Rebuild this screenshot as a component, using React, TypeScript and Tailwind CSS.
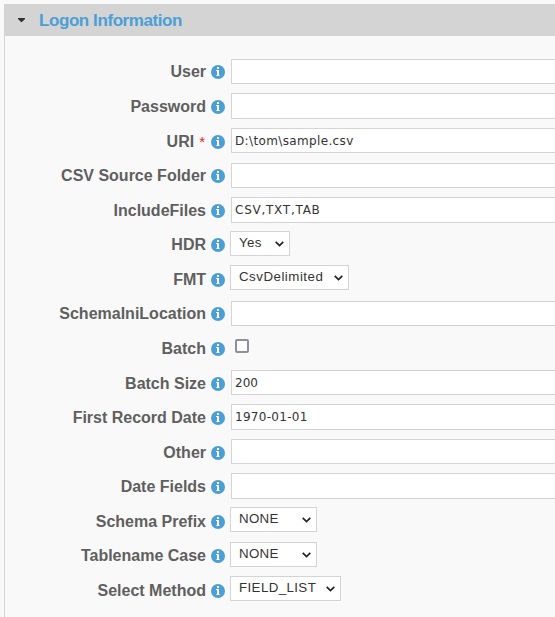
type Kind = 'text' | 'select' | 'check';

interface Field {
  label: string;
  row: string;
  kind: Kind;
  box?: string;
  value?: string;
  tracking?: string;
  required?: boolean;
}

const fields: Field[] = [
  { label: 'User', row: 'h-[35px]', kind: 'text', box: 'mt-[2px] h-[25px]' },
  { label: 'Password', row: 'h-[35px]', kind: 'text', box: 'mt-px h-[26px]' },
  { label: 'URI', row: 'h-[34px]', kind: 'text', box: 'mt-px h-[25px]', value: 'D:\\tom\\sample.csv', tracking: 'tracking-[0.36px]', required: true },
  { label: 'CSV Source Folder', row: 'h-[35px]', kind: 'text', box: 'mt-[2px] h-[25px]' },
  { label: 'IncludeFiles', row: 'h-[34px]', kind: 'text', box: 'mt-px h-[26px]', value: 'CSV,TXT,TAB', tracking: 'tracking-[0.75px]' },
  { label: 'HDR', row: 'h-[35px]', kind: 'select', box: 'mt-px w-[60px]', value: 'Yes', tracking: 'tracking-[0.4px]' },
  { label: 'FMT', row: 'h-[34px]', kind: 'select', box: 'w-[119px]', value: 'CsvDelimited', tracking: 'tracking-[0.5px]' },
  { label: 'SchemaIniLocation', row: 'h-[35px]', kind: 'text', box: 'mt-[2px] h-[25px]' },
  { label: 'Batch', row: 'h-[35px]', kind: 'check' },
  { label: 'Batch Size', row: 'h-[34px]', kind: 'text', box: 'mt-px h-[25px]', value: '200' },
  { label: 'First Record Date', row: 'h-[35px]', kind: 'text', box: 'mt-px h-[26px]', value: '1970-01-01', tracking: 'tracking-[0.3px]' },
  { label: 'Other', row: 'h-[34px]', kind: 'text', box: 'mt-px h-[25px]' },
  { label: 'Date Fields', row: 'h-[35px]', kind: 'text', box: 'mt-px h-[26px]' },
  { label: 'Schema Prefix', row: 'h-[34px]', kind: 'select', box: 'w-[87px]', value: 'NONE', tracking: 'tracking-[0.3px]' },
  { label: 'Tablename Case', row: 'h-[35px]', kind: 'select', box: 'mt-px w-[87px]', value: 'NONE', tracking: 'tracking-[0.3px]' },
  { label: 'Select Method', row: 'h-[34px]', kind: 'select', box: 'w-[111px]', value: 'FIELD_LIST', tracking: 'tracking-[0.4px]' },
];

function InfoIcon() {
  return (
    <svg className="mt-2 ml-[5px] h-[14px] w-[14px] shrink-0" viewBox="0 0 14 14">
      <circle cx="7" cy="7" r="7" fill="#4b9fd5" />
      <path d="M6 2h2v2H6zM5 5h3v6H6V6H5z" fill="#fff" />
      <path d="M5 10h4v1H5z" fill="#fff" opacity="0.6" />
    </svg>
  );
}

function Control({ field }: { field: Field }) {
  if (field.kind === 'check') {
    return <span className="mt-[5px] ml-[10px] h-[14px] w-[14px] rounded-[2px] border-2 border-[#8f8f9d] bg-white" />;
  }
  if (field.kind === 'select') {
    return (
      <div className={`ml-[5px] flex h-[25px] items-start justify-between border border-[#d4d4d4] bg-white pr-[5px] pl-2 ${field.box}`}>
        <span className={`whitespace-nowrap font-['Liberation_Sans',sans-serif] text-[13.3px] leading-[22px] text-[#333] ${field.tracking ?? ''}`}>{field.value}</span>
        <svg className="mt-[9px] h-[6px] w-[9px] shrink-0" viewBox="0 0 9 6" fill="none" stroke="#222" strokeWidth="1.7">
          <path d="M0.7 0.8L4.5 4.5L8.3 0.8" />
        </svg>
      </div>
    );
  }
  return (
    <div className={`ml-[6px] flex-1 border border-r-0 border-[#d4d4d4] bg-white pl-[3px] ${field.box}`}>
      <span className={`block whitespace-nowrap font-['DejaVu_Sans',sans-serif] text-[12px] leading-[25px] text-[#333] ${field.tracking ?? ''}`}>{field.value}</span>
    </div>
  );
}

export default function App() {
  return (
    <div className="h-[617px] w-[555px] overflow-hidden bg-[#f9f9f9] pt-1 pl-1 font-['Liberation_Sans',sans-serif]">
      <header className="flex h-8 items-center bg-[#d4d4d4] pl-[14px]">
        <svg className="h-[4px] w-[7px]" viewBox="0 0 7 4">
          <path d="M0 0h7v1L4 4H3L0 1z" fill="#333" />
        </svg>
        <h2 className="ml-[14px] pt-[2px] text-[17px] font-bold leading-[30px] tracking-[-0.42px] text-[#4b9fd5]">Logon Information</h2>
      </header>
      <main className="h-[581px] border-l border-[#d4d4d4] pt-[21px]">
        {fields.map((field) => (
          <div key={field.label} className={`flex items-start ${field.row}`}>
            <label className="w-[201px] whitespace-nowrap text-right text-[16px] leading-[29px] font-bold text-[#5f5f5f]">
              {field.label}
              {field.required && <span className="mr-px ml-[5px] text-[15px] font-normal text-[#e22]">*</span>}
            </label>
            <InfoIcon />
            <Control field={field} />
          </div>
        ))}
      </main>
    </div>
  );
}
